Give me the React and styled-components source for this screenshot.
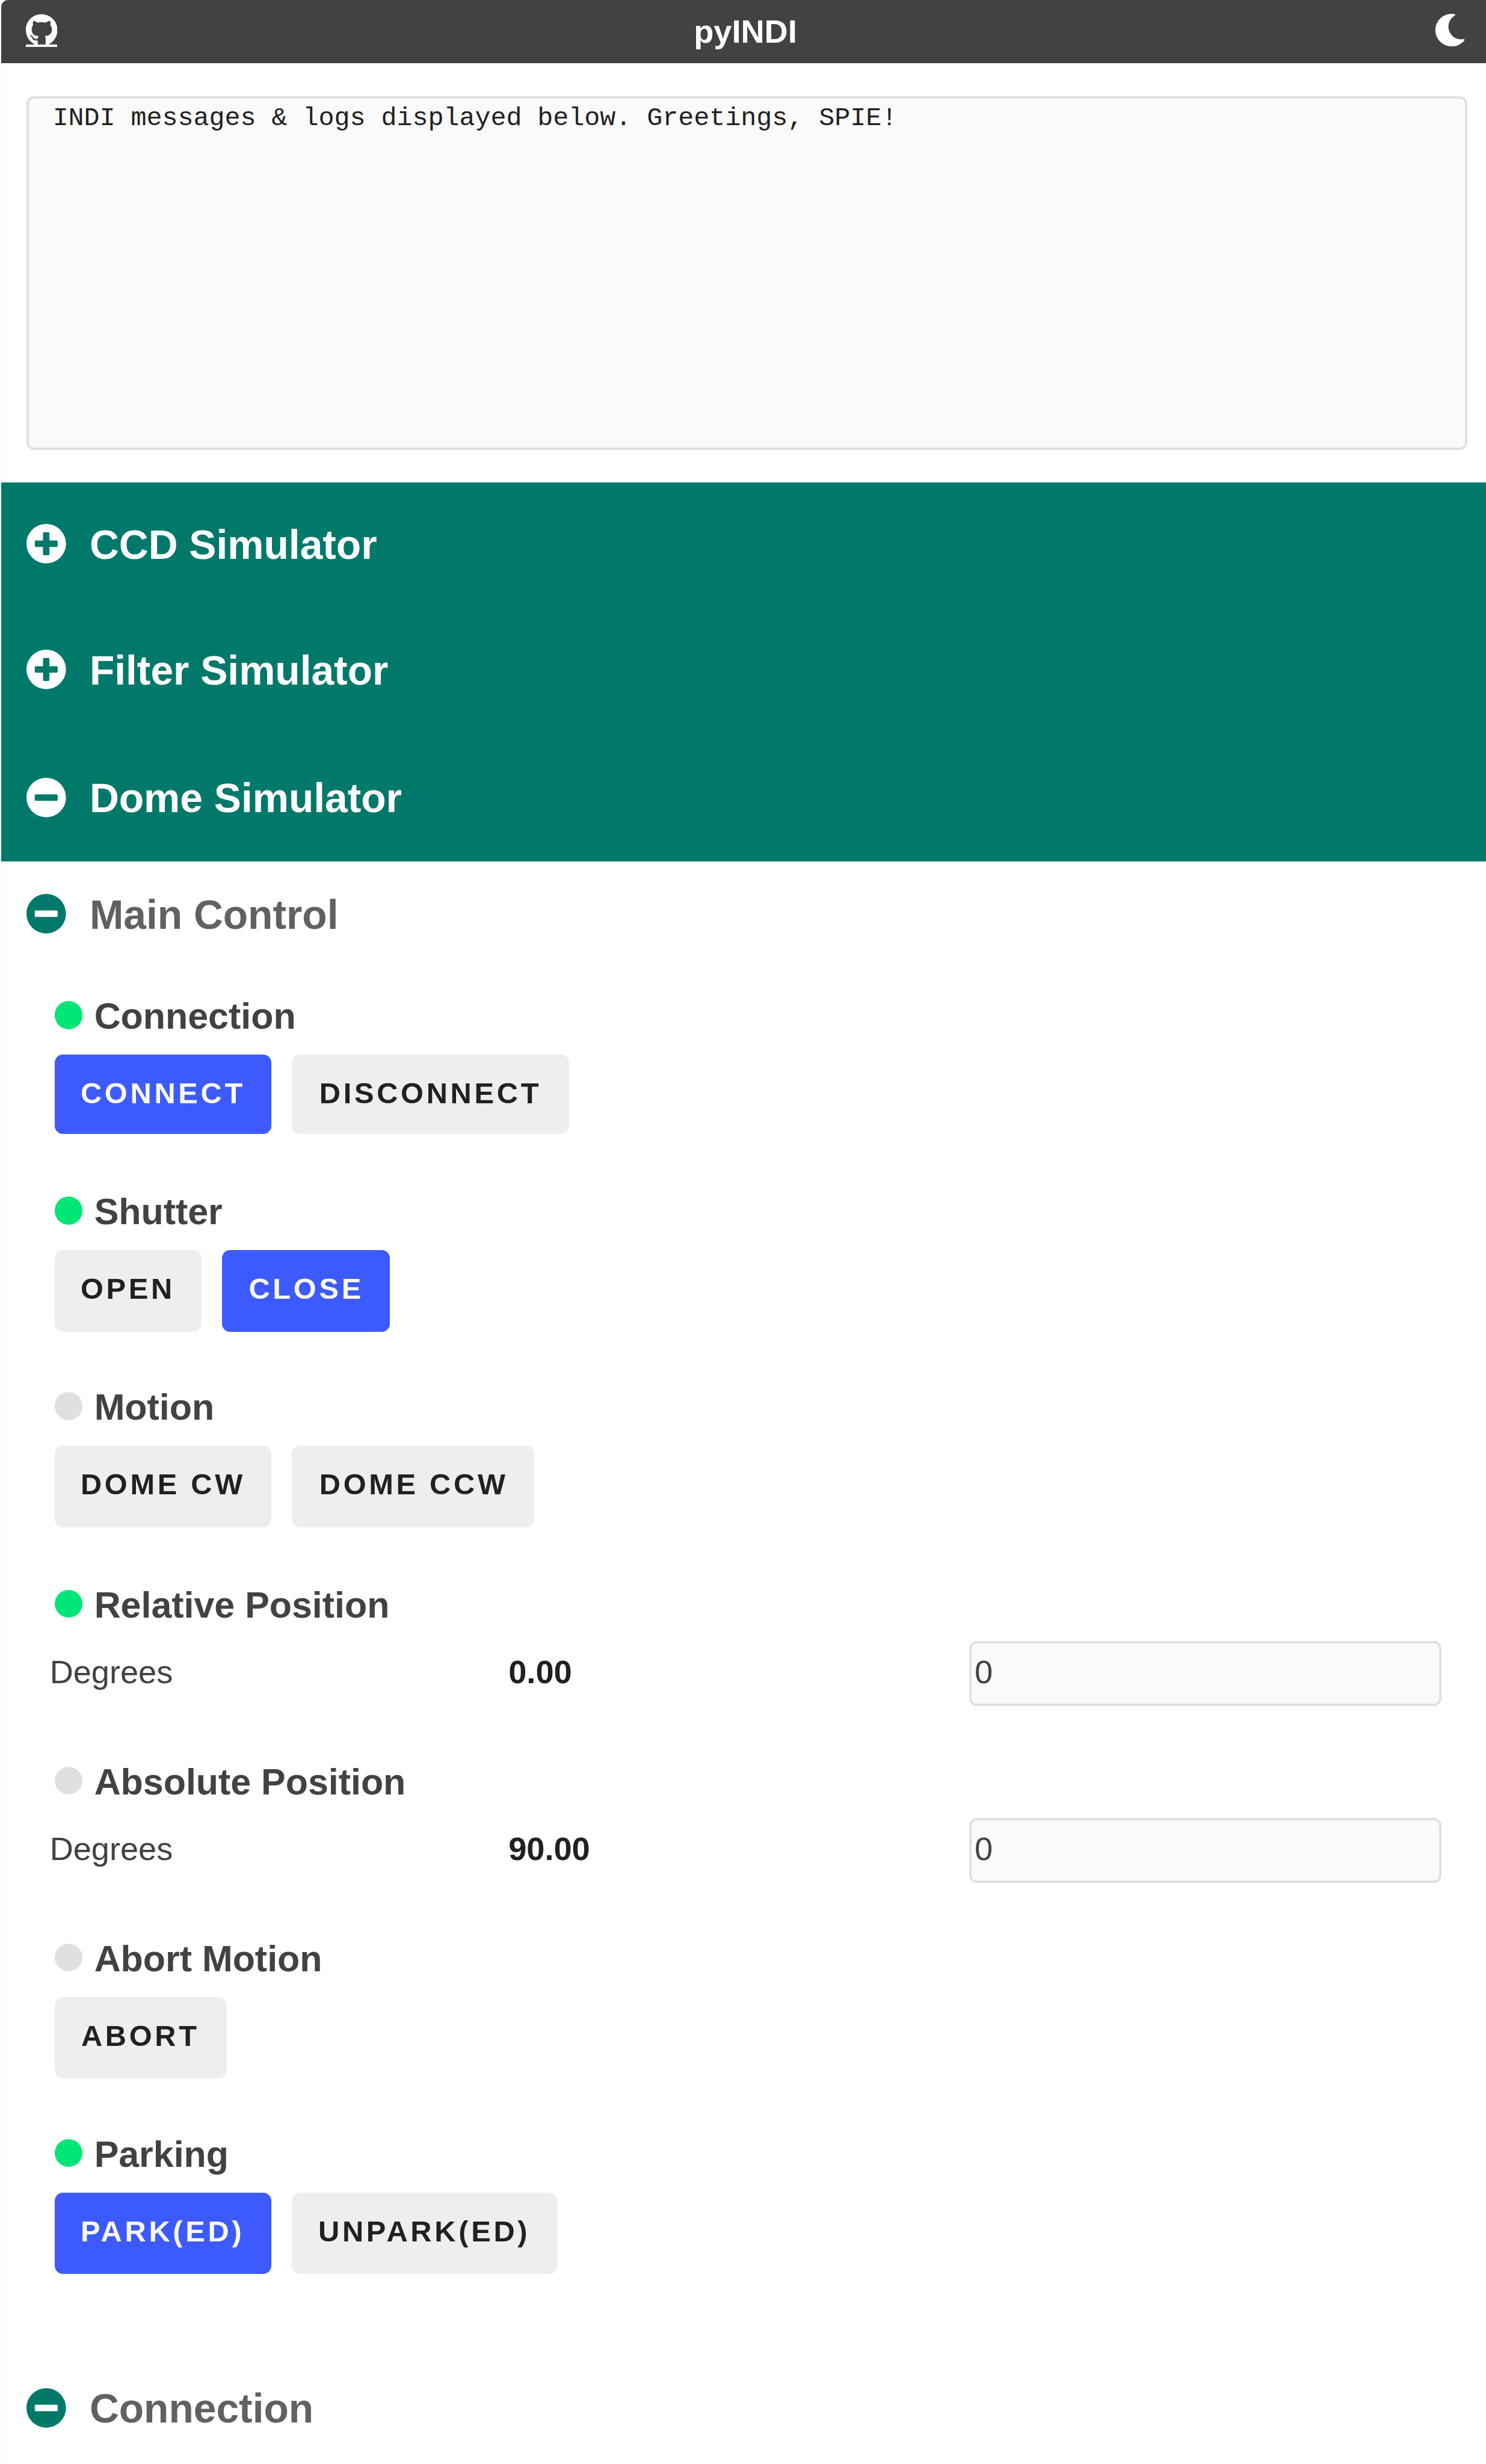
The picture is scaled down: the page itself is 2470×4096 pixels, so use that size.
import React from "react";
import styled, { createGlobalStyle } from "styled-components";
import { FaGithub, FaMoon, FaPlusCircle, FaMinusCircle } from "react-icons/fa";

const GlobalStyle = createGlobalStyle`
  html { font-size: 9.6711px; overflow: hidden; }
  body { margin: 0; background: #fafafa; }
  *, *::before, *::after { box-sizing: border-box; }
`;

const Page = styled.div`
  height: 423.55rem;
  margin-left: 0.2rem;
  overflow: hidden;
  background: #fff;
  border-top-left-radius: 1.2rem;
  font-family: "Liberation Sans", Arial, sans-serif;
  color: #212121;
`;

const TopBar = styled.header`
  display: flex;
  justify-content: space-between;
  align-items: center;
  height: 10.9rem;
  padding: 0 3.4rem 0.4rem 4.2rem;
  background: #424242;
  border-bottom: 1px solid #3d3b3d;
  color: #fff;
`;

const RepoLink = styled.a`
  position: relative;
  display: flex;
  color: inherit;

  svg {
    width: 5.425rem;
    height: 5.6rem;
  }

  &::after {
    content: "";
    position: absolute;
    left: 0;
    right: 0;
    top: 5.3rem;
    height: 0.4rem;
    background: #fff;
  }
`;

const Title = styled.h1`
  margin: 0;
  padding-top: 0.3rem;
  font-size: 5.6rem;
  line-height: 1;
`;

const ThemeToggle = styled.span`
  display: flex;
  font-size: 5.6rem;
`;

const Log = styled.textarea`
  display: block;
  width: 247.6rem;
  height: 60.8rem;
  margin: 5.6rem 0 5.6rem 4.4rem;
  padding: 0.85rem 4.05rem;
  border: 4px solid #e0e0e0;
  border-radius: 1.3rem;
  background: #fafafa;
  color: #212121;
  font-family: "Liberation Mono", "Courier New", monospace;
  font-size: 4.48rem;
  line-height: 5.2rem;
  resize: none;
  outline: none;
`;

const Heading = styled.h2`
  display: flex;
  align-items: center;
  gap: 4rem;
  height: ${(p) => p.$height}rem;
  margin: 0;
  padding-left: 4.2rem;
  font-size: 7rem;
  line-height: 1;
  color: ${(p) => (p.$device ? "#fff" : "#616161")};

  svg {
    flex: none;
    color: ${(p) => (p.$device ? "#fff" : "#00796b")};
  }

  span {
    padding-top: 0.3rem;
  }
`;

const Devices = styled.section`
  background: #00796b;
`;

const Properties = styled.section`
  height: 238.8rem;
  padding-top: 6rem;
`;

const Property = styled.div`
  height: ${(p) => p.$height}rem;
`;

const PropertyName = styled.h3`
  display: flex;
  align-items: flex-start;
  gap: 2rem;
  height: ${(p) => p.$height}rem;
  margin: 0;
  padding-left: 9.2rem;
  font-size: 6.3rem;
  line-height: 4.8rem;
  color: #424242;

  span {
    margin-top: 0.2rem;
  }
`;

const Light = styled.i`
  flex: none;
  width: 4.8rem;
  height: 4.8rem;
  border-radius: 50%;
  background: ${(p) => (p.$ok ? "#00e676" : "#e0e0e0")};
`;

const Switches = styled.div`
  display: flex;
  gap: 3.6rem;
  padding-left: 9.2rem;
`;

const Switch = styled.button`
  display: flex;
  align-items: flex-start;
  width: ${(p) => p.$width}rem;
  height: ${(p) => p.$height}rem;
  padding: 4.1rem 0 0 ${(p) => p.$inset}rem;
  border: 0;
  border-radius: 1.4rem;
  background: ${(p) => (p.$on ? "#3d5afe" : "#eeeeee")};
  color: ${(p) => (p.$on ? "#fafafa" : "#212121")};
  font: bold 5.04rem/1 "Liberation Sans", Arial, sans-serif;
  letter-spacing: 0.097em;
  text-transform: uppercase;
  white-space: nowrap;
`;

const NumberRow = styled.label`
  display: grid;
  grid-template-columns: 78.9rem 79.2rem 81.2rem;
  align-items: center;
  height: 11.2rem;
  padding-left: 8.3rem;
  font-size: 5.6rem;
  line-height: 1;
`;

const NumberLabel = styled.span`
  padding: 0 0 0.7rem 0.05rem;
  color: #424242;
`;

const NumberValue = styled.b`
  padding-bottom: 0.7rem;
`;

const NumberInput = styled.input`
  width: 100%;
  height: 11.2rem;
  padding: 0 0 0.7rem 0.5rem;
  border: 4px solid #e0e0e0;
  border-radius: 1.3rem;
  background: #fafafa;
  color: #424242;
  font: 5.6rem "Liberation Sans", Arial, sans-serif;
  outline: none;
`;

const devices = [
  { name: "CCD Simulator", open: false, height: 21.2 },
  { name: "Filter Simulator", open: false, height: 22 },
  { name: "Dome Simulator", open: true, height: 22 },
];

const properties = [
  {
    name: "Connection", ok: true, height: 33.6, buttonHeight: 13.6,
    switches: [
      { label: "Connect", on: true, width: 37.2, inset: 4.45 },
      { label: "Disconnect", width: 47.6, inset: 4.68 },
    ],
  },
  {
    name: "Shutter", ok: true, height: 33.6,
    switches: [
      { label: "Open", width: 25.2, inset: 4.45 },
      { label: "Close", on: true, width: 28.8, inset: 4.55 },
    ],
  },
  {
    name: "Motion", height: 34,
    switches: [
      { label: "Dome CW", width: 37.2, inset: 4.45 },
      { label: "Dome CCW", width: 41.6, inset: 4.68 },
    ],
  },
  { name: "Relative Position", ok: true, height: 30.4, value: "0.00" },
  { name: "Absolute Position", height: 30.4, value: "90.00" },
  {
    name: "Abort Motion", height: 33.6,
    switches: [{ label: "Abort", width: 29.6, inset: 4.55 }],
  },
  {
    name: "Parking", ok: true, height: 23.2,
    switches: [
      { label: "Park(ed)", on: true, width: 37.2, inset: 4.45 },
      { label: "Unpark(ed)", width: 45.6, inset: 4.5 },
    ],
  },
];

function CollapseHeading({ name, open, height, device }) {
  const Icon = open ? FaMinusCircle : FaPlusCircle;
  return (
    <Heading $height={height} $device={device}>
      <Icon />
      <span>{name}</span>
    </Heading>
  );
}

function PropertyView({ name, ok, height, buttonHeight = 14, switches, value }) {
  return (
    <Property $height={height}>
      <PropertyName $height={switches ? 9.2 : 8.8}>
        <Light $ok={ok} />
        <span>{name}</span>
      </PropertyName>
      {switches ? (
        <Switches>
          {switches.map((s) => (
            <Switch key={s.label} $on={s.on} $width={s.width} $inset={s.inset} $height={buttonHeight}>
              {s.label}
            </Switch>
          ))}
        </Switches>
      ) : (
        <NumberRow>
          <NumberLabel>Degrees</NumberLabel>
          <NumberValue>{value}</NumberValue>
          <NumberInput defaultValue="0" />
        </NumberRow>
      )}
    </Property>
  );
}

export default function App() {
  return (
    <>
      <GlobalStyle />
      <Page>
        <TopBar>
          <RepoLink>
            <FaGithub />
          </RepoLink>
          <Title>pyINDI</Title>
          <ThemeToggle>
            <FaMoon />
          </ThemeToggle>
        </TopBar>
        <Log readOnly defaultValue="INDI messages & logs displayed below. Greetings, SPIE!" />
        <Devices>
          {devices.map((d) => (
            <CollapseHeading key={d.name} device {...d} />
          ))}
        </Devices>
        <CollapseHeading name="Main Control" open height={18} />
        <Properties>
          {properties.map((p) => (
            <PropertyView key={p.name} {...p} />
          ))}
        </Properties>
        <CollapseHeading name="Connection" open height={18} />
      </Page>
    </>
  );
}
